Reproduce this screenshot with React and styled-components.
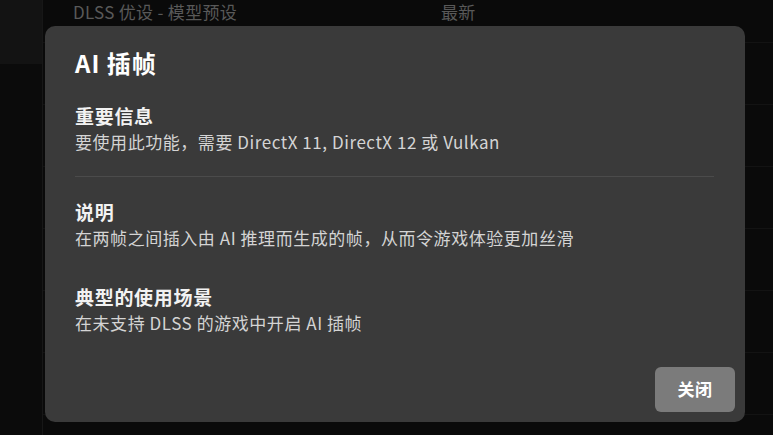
import React from "react";
import styled, { createGlobalStyle } from "styled-components";

const GlobalStyle = createGlobalStyle`
  html, body {
    margin: 0;
    padding: 0;
    background: #0b0b0b;
    overflow: hidden;
  }
  body {
    font-family: "Noto Sans CJK SC", "Noto Sans", sans-serif;
  }
`;

const Page = styled.div`
  position: relative;
  display: flex;
  width: 773px;
  height: 435px;
  overflow: hidden;
  background: #0b0b0b;
`;

const Sidebar = styled.div`
  width: 42px;
  flex: none;
  display: flex;
  flex-direction: column;
  border-right: 1px solid #191919;
`;

const SidebarTop = styled.div`
  height: 64px;
  background: #151515;
`;

const SidebarRest = styled.div`
  flex: 1;
  background: #0c0c0c;
`;

const Main = styled.div`
  flex: 1;
  display: flex;
  flex-direction: column;
  margin-top: -19px;
`;

const Row = styled.div`
  flex: none;
  height: 61px;
  display: grid;
  grid-template-columns: 368px 1fr;
  align-items: center;
  padding-left: 30px;
  border-bottom: 1px solid #151515;
  color: #5e5e5e;
  font-size: 17px;
  letter-spacing: 0.3px;
`;

const Backdrop = styled.div`
  position: absolute;
  inset: 0;
  background: rgba(0, 0, 0, 0.05);
`;

const Modal = styled.div`
  position: absolute;
  left: 45px;
  top: 26px;
  width: 700px;
  height: 396px;
  box-sizing: border-box;
  display: flex;
  flex-direction: column;
  background: #3a3a3a;
  border-radius: 10px;
  color: #ffffff;
`;

const Body = styled.div`
  padding: 21px 31px 0 30px;
`;

const Title = styled.h2`
  margin: 0 0 24px;
  font-size: 24px;
  line-height: 32px;
  font-weight: 700;
  letter-spacing: 1px;
`;

const Section = styled.section`
  margin-top: ${p => p.$gap || 0}px;
`;

const Heading = styled.h3`
  margin: 0;
  font-size: 19px;
  line-height: 26px;
  font-weight: 700;
  letter-spacing: 0.7px;
  color: #f2f2f2;
`;

const Text = styled.p`
  margin: 0;
  font-size: 17px;
  line-height: 26px;
  letter-spacing: 0.55px;
  color: #d4d4d4;
`;

const Divider = styled.hr`
  margin: 21px 0 22px;
  border: none;
  border-top: 1px solid #4b4b4b;
`;

const Footer = styled.div`
  margin-top: auto;
  display: flex;
  justify-content: flex-end;
  padding: 10px;
`;

const Button = styled.button`
  width: 80px;
  height: 45px;
  padding: 0 0 2px;
  border: none;
  border-radius: 6px;
  background: #7b7b7b;
  color: #ffffff;
  font-family: inherit;
  font-size: 17px;
  font-weight: 700;
  letter-spacing: 0.5px;
  cursor: pointer;
`;

const rows = [
  ["DLSS 优设 - 模型预设", "最新"],
  ["", ""],
  ["", ""],
  ["", ""],
  ["", ""],
  ["", ""],
  ["", ""],
  ["最高帧率设置", "全局 - 关"],
];

export default function App() {
  return (
    <>
      <GlobalStyle />
      <Page>
        <Sidebar>
          <SidebarTop />
          <SidebarRest />
        </Sidebar>
        <Main>
          {rows.map(([name, value], i) => (
            <Row key={i}>
              <span>{name}</span>
              <span>{value}</span>
            </Row>
          ))}
        </Main>
        <Backdrop />
        <Modal>
          <Body>
            <Title>AI 插帧</Title>
            <Section>
              <Heading>重要信息</Heading>
              <Text>要使用此功能，需要 DirectX 11, DirectX 12 或 Vulkan</Text>
            </Section>
            <Divider />
            <Section>
              <Heading>说明</Heading>
              <Text>在两帧之间插入由 AI 推理而生成的帧，从而令游戏体验更加丝滑</Text>
            </Section>
            <Section $gap={33}>
              <Heading>典型的使用场景</Heading>
              <Text>在未支持 DLSS 的游戏中开启 AI 插帧</Text>
            </Section>
          </Body>
          <Footer>
            <Button>关闭</Button>
          </Footer>
        </Modal>
      </Page>
    </>
  );
}
